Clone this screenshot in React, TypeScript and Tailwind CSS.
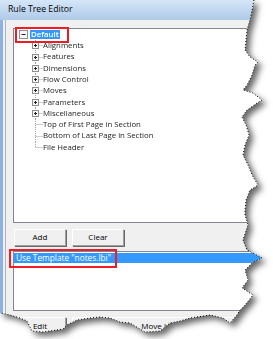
import React from 'react';

// torn edge outline (right side, then bottom), in page pixels
const tornPoints: [number, number][] = [
  [254, 0], [252, 10], [250, 20], [247, 30], [246, 40], [245, 50], [250, 57], [258, 62], [255, 65],
  [252, 75], [247, 85], [243, 90], [253, 93], [262, 100], [257, 103], [247, 110], [242, 117],
  [246, 125], [249, 135], [245, 145], [243, 155], [248, 165], [252, 175], [258, 185], [250, 190],
  [246, 200], [245, 210], [245, 215], [248, 225], [243, 240], [247, 250], [262, 258], [253, 262],
  [245, 270], [248, 280], [242, 288], [253, 295], [245, 305], [240, 310], [237, 315], [230, 323],
  [223, 318], [210, 315], [190, 318], [180, 321], [170, 323], [160, 331], [145, 332], [130, 323],
  [120, 322], [110, 318], [100, 317], [90, 318], [77, 320], [67, 325], [63, 329], [43, 332],
  [32, 331], [27, 321], [20, 318], [10, 315], [0, 313],
];

const clip = 'polygon(0px 0px, ' + tornPoints.map(([x, y]) => `${x}px ${y}px`).join(', ') + ')';

type Node = { label: string; expandable: boolean };

const children: Node[] = [
  { label: 'Alignments', expandable: true },
  { label: 'Features', expandable: true },
  { label: 'Dimensions', expandable: true },
  { label: 'Flow Control', expandable: true },
  { label: 'Moves', expandable: true },
  { label: 'Parameters', expandable: true },
  { label: 'Miscellaneous', expandable: true },
  { label: 'Top of First Page in Section', expandable: false },
  { label: 'Bottom of Last Page in Section', expandable: false },
  { label: 'File Header', expandable: false },
];

function Connector({ expandable, last }: { expandable: boolean; last: boolean }) {
  return (
    <svg width="12" height="11.3" viewBox="0 0 12 11.3" className="shrink-0">
      <line x1="4.5" y1="0" x2="4.5" y2={last ? 5.65 : 11.3} stroke="#a0a0a0" strokeWidth="1" strokeDasharray="1 1" />
      <line x1="4.5" y1="5.5" x2="12" y2="5.5" stroke="#a0a0a0" strokeWidth="1" strokeDasharray="1 1" />
      {expandable && (
        <>
          <rect x="1.5" y="2.5" width="6" height="6" fill="#f7f7f7" stroke="#8e8f8f" />
          <line x1="3" y1="5.5" x2="6" y2="5.5" stroke="#202020" />
          <line x1="4.5" y1="4" x2="4.5" y2="7" stroke="#202020" />
        </>
      )}
    </svg>
  );
}

function Button({ label, className }: { label: string; className: string }) {
  return (
    <div
      className={`h-[17px] flex items-center justify-center bg-[#f0f0f0] border border-t-white border-l-white border-r-[#a0a0a0] border-b-[#a0a0a0] shadow-[1px_1px_0_#696969] text-[8px] text-black ${className}`}
    >
      {label}
    </div>
  );
}

export default function App() {
  return (
    <div className="relative w-[273px] h-[339px] bg-white overflow-hidden" style={{ fontFamily: '"Open Sans", "Noto Sans", sans-serif' }}>
      <div className="drop-shadow-[4px_4px_3px_rgba(0,0,0,0.6)]">
        <div className="w-[273px] h-[339px] flex flex-col bg-[#f0f0f0]" style={{ clipPath: clip }}>
          {/* title bar */}
          <div className="h-[20px] shrink-0 flex items-center pl-[8px] bg-gradient-to-b from-[#d6e6f7] via-[#c2d8f0] to-[#afcae8] text-[8.7px] text-black">
            Rule Tree Editor
          </div>

          <div className="flex-1 flex flex-col border-l-[3px] border-[#8db2e3]">
            <div className="flex-1 flex flex-col border-l border-[#a9b7c9] ml-[2px] pl-[7px] pt-[8px]">
              {/* tree */}
              <div className="relative h-[195px] shrink-0 bg-white border border-[#828790] border-r-0 text-[7.8px] text-[#1e1e1e]">
                <div className="h-[11.3px] flex items-center pl-[5px] gap-[2px]">
                  <svg width="9" height="9" viewBox="0 0 9 9" className="shrink-0">
                    <rect x="0.5" y="0.5" width="8" height="8" fill="#f7f7f7" stroke="#8e8f8f" />
                    <line x1="2.5" y1="4.5" x2="6.5" y2="4.5" stroke="#202020" />
                  </svg>
                  <span className="bg-[#3399ff] text-white px-[1px] leading-[9px] font-semibold">Default</span>
                </div>
                <div className="pl-[17px]">
                  {children.map((c, i) => (
                    <div key={c.label} className="h-[11.3px] flex items-center">
                      <Connector expandable={c.expandable} last={i === children.length - 1} />
                      <span className="whitespace-nowrap leading-none">{c.label}</span>
                    </div>
                  ))}
                </div>
                {/* annotation */}
                <div className="absolute left-[1px] top-[-2px] w-[54px] h-[16px] border-2 border-[#ef1c25]" />
              </div>

              {/* add / clear */}
              <div className="h-[28px] shrink-0 flex items-center gap-[6px] pl-[1px]">
                <Button label="Add" className="w-[52px]" />
                <Button label="Clear" className="w-[52px]" />
              </div>

              {/* list */}
              <div className="relative h-[60px] shrink-0 bg-white border border-[#828790] border-r-0 pt-[1px] text-[8.3px]">
                <div className="h-[10px] bg-[#3399ff] text-white flex items-center pl-[2px] whitespace-nowrap">
                  Use Template "notes.lbi"
                </div>
                <div className="absolute left-[-5px] top-[-3px] w-[108px] h-[19px] border-2 border-[#ef1c25]" />
              </div>

              {/* bottom buttons */}
              <div className="flex items-center gap-[6px] pt-[6px] pl-[1px]">
                <Button label="Edit" className="w-[52px]" />
                <Button label="Move Up" className="w-[172px]" />
              </div>
            </div>
          </div>
        </div>
      </div>

      {/* dotted torn edge */}
      <svg width="273" height="339" className="absolute inset-0 pointer-events-none">
        <polyline
          points={tornPoints.map(([x, y]) => `${x},${y}`).join(' ')}
          fill="none"
          stroke="#000"
          strokeWidth="1"
          strokeDasharray="1 2"
        />
      </svg>
    </div>
  );
}
